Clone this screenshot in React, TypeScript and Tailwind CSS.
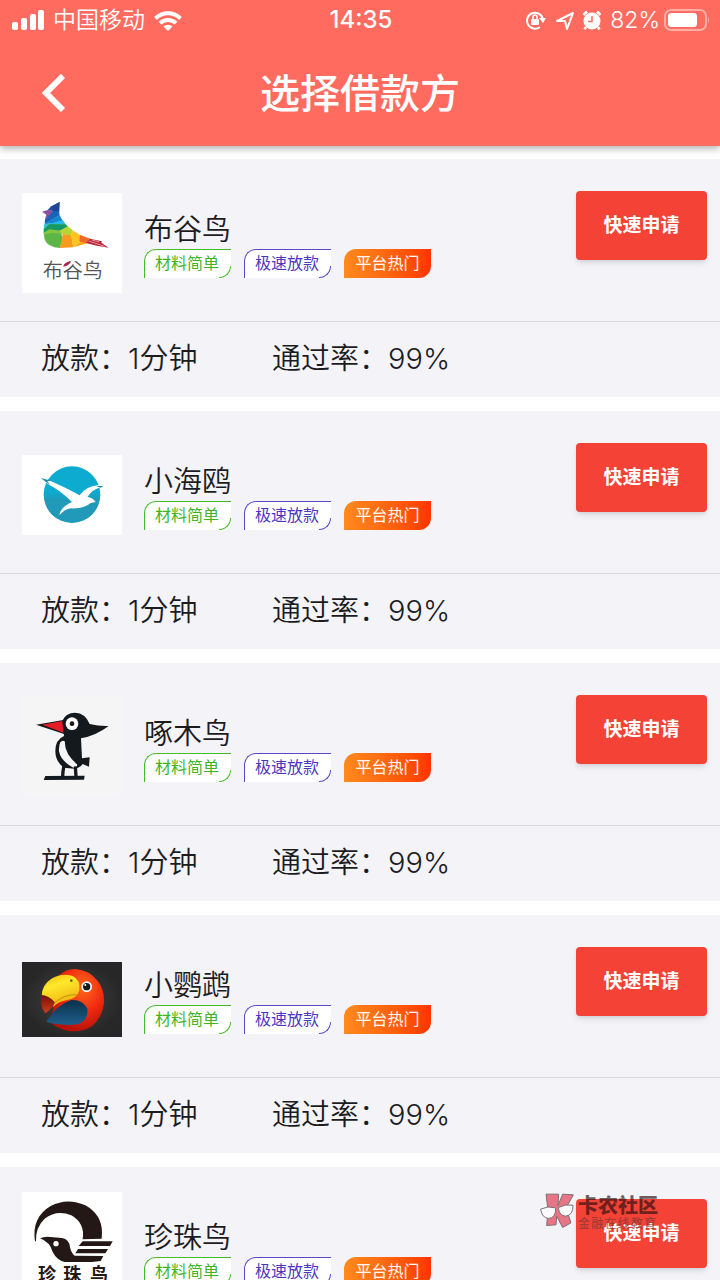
import type { ReactNode } from 'react';

function CuckooLogo() {
  return (
    <svg viewBox="36 39 300 300" className="w-full bg-white" role="img" aria-label="布谷鸟">
      <path d="M149 66 L122 80 L112 91 L148 96 Z" fill="#2450a8" />
      <path d="M149 66 L146 96 L128 92 L122 80 Z" fill="#1f4596" />
      <path d="M96 95 L113 90 L128 92 L120 108 L105 118 L109 104 Z" fill="#8a4fa0" />
      <path d="M105 118 L120 104 L128 92 L147 94 L149 106 L104 132 Z" fill="#1c62b5" />
      <path d="M103 133 L124 118 L149 106 L158 122 L130 130 Z" fill="#1487d0" />
      <path d="M103 133 L130 128 L158 120 L168 134 L118 133 L101 145 Z" fill="#28b8e4" />
      <path d="M101 146 L118 132 L167 133 L174 140 L150 152 L101 160 Z" fill="#159a63" />
      <path d="M101 160 L118 150 L152 152 L158 178 L150 204 Q112 202 104 178 Z" fill="#5cb545" />
      <path d="M101 158 L118 148 L152 152 L158 162 L130 158 L102 164 Z" fill="#86c540" />
      <path d="M150 152 L173 139 L188 151 L184 166 L158 164 Z" fill="#b9d534" />
      <path d="M158 163 L184 166 L190 202 L150 204 Z" fill="#f79a20" />
      <path d="M188 151 L210 165 L209 190 L190 202 L183 166 Z" fill="#fdc51f" />
      <path d="M209 164 L240 178 L232 190 L190 202 L209 188 Z" fill="#f9a51e" />
      <path d="M210 165 L242 177 L228 190 L208 184 Z" fill="#ee6a26" />
      <path d="M240 176 L276 184 L274 188 L296 203 L260 197 L228 189 Z" fill="#b8253c" />
      <path d="M236 183 L284 199 M246 180 L268 186" stroke="#f6d0c8" strokeWidth="2" fill="none" />
      <text x="98" y="294" fontSize="60" fontWeight="350" fill="#555" className="font-['Noto_Sans_CJK_SC',sans-serif]">
        布谷鸟
      </text>
      <path d="M160 260 Q160 248 182 244 Q180 256 160 260 Z" fill="#b3204d" />
    </svg>
  );
}

function SeagullLogo() {
  return (
    <svg viewBox="36 44 300 238" className="w-full bg-white" role="img" aria-label="小海鸥">
      <defs>
        <linearGradient id="sea" x1="0" y1="0" x2="0" y2="1">
          <stop offset="0.45" stopColor="#0eabd0" />
          <stop offset="0.6" stopColor="#2199b8" />
        </linearGradient>
      </defs>
      <circle cx="186" cy="163" r="85" fill="url(#sea)" />
      <path
        d="M100 119 L122 122 Q164 140 209 165 Q226 138 266 134 L274 140 Q248 146 232 170 Q248 172 257 185 L242 188 Q222 206 184 204 Q164 206 148 225 Q150 202 186 185 Q154 152 112 130 Z"
        fill="#fff"
      />
      <path d="M92 113 L124 121 L112 122 L120 134 Z M258 137 L280 137 L272 142 Z" fill="#178faa" />
    </svg>
  );
}

function WoodpeckerLogo() {
  return (
    <svg viewBox="36 22 300 300" className="w-full bg-[#f5f5f5]" role="img" aria-label="啄木鸟">
      <path d="M78 105 L160 91 L162 133 Z" fill="#14191d" />
      <path d="M97 105 L157 94 L160 129 Z" fill="#e51d27" />
      <path
        d="M158 92 Q168 69 195 69 Q226 70 239 103 Q266 110 296 109 Q258 138 213 146 L216 206 L239 203 L237 231 L218 223 Q208 236 194 237 L162 234 Q136 216 136 184 Q136 150 162 139 Z"
        fill="#14191d"
      />
      <path d="M151 158 Q158 150 165 156 Q162 190 201 224 Q203 236 190 234 Q152 214 147 185 Q146 168 151 158 Z" fill="#f5f5f5" />
      <circle cx="186" cy="102" r="19" fill="#fff" />
      <circle cx="186" cy="102" r="7" fill="#14191d" />
      <path d="M162 228 Q158 246 158 260 M196 230 L198 260" stroke="#14191d" strokeWidth="10" fill="none" />
      <path d="M106 259 L224 258 L222 270 L101 271 Z" fill="#14191d" />
    </svg>
  );
}

function ParrotLogo() {
  return (
    <svg viewBox="36 30 300 225" className="w-full bg-[#2e2d2c]" role="img" aria-label="小鹦鹉">
      <defs>
        <radialGradient id="night">
          <stop offset="0" stopColor="#454443" />
          <stop offset="1" stopColor="#282727" />
        </radialGradient>
        <radialGradient id="head" cx="0.6" cy="0.3" r="0.7">
          <stop offset="0" stopColor="#ff6a1e" />
          <stop offset="0.55" stopColor="#f22a10" />
          <stop offset="1" stopColor="#b81208" />
        </radialGradient>
        <linearGradient id="beak" x1="0" y1="0" x2="0.4" y2="1">
          <stop offset="0" stopColor="#f0b80c" />
          <stop offset="0.4" stopColor="#ffe92c" />
          <stop offset="1" stopColor="#eeb411" />
        </linearGradient>
        <linearGradient id="wing" x1="0" y1="0" x2="0" y2="1">
          <stop offset="0" stopColor="#0c304c" />
          <stop offset="1" stopColor="#1d5f8c" />
        </linearGradient>
        <linearGradient id="tip" x1="0" y1="0" x2="0" y2="1">
          <stop offset="0" stopColor="#6e1208" />
          <stop offset="1" stopColor="#d93a1c" />
        </linearGradient>
      </defs>
      <rect x="36" y="30" width="300" height="225" fill="url(#night)" />
      <path
        d="M148 69 Q168 51 196 51 Q238 54 264 88 Q284 116 282 152 Q276 200 244 224 Q212 242 172 236 Q140 228 124 213 L130 165 Z"
        fill="url(#head)"
      />
      <path d="M95 132 Q96 98 124 80 Q156 62 188 72 Q212 84 208 114 Q202 140 172 144 Q146 148 130 164 Z" fill="url(#beak)" />
      <path d="M128 158 Q160 126 200 128" stroke="#a97708" strokeWidth="2" fill="none" />
      <path d="M94 129 Q116 130 134 150 Q132 166 106 184 Q88 160 94 129 Z" fill="url(#tip)" />
      <path d="M109 210 Q138 160 184 144 Q218 142 232 170 Q236 206 202 217 Q158 224 109 210 Z" fill="url(#wing)" />
      <circle cx="184" cy="86" r="4" fill="#7b5a10" />
      <circle cx="230" cy="104" r="16" fill="#fff" />
      <circle cx="230" cy="104" r="11" fill="#16191c" />
      <circle cx="226" cy="99" r="3" fill="#fff" />
    </svg>
  );
}

function PearlLogo() {
  return (
    <svg viewBox="36 36 300 354" className="w-full bg-white" role="img" aria-label="珍珠鸟">
      <g fill="#231815">
        <path d="M75 184 Q64 112 122 78 Q172 52 226 76 Q276 104 276 158 L275 176 L218 178 Q226 130 184 106 Q140 88 104 116 Q76 142 78 184 Z" />
        <path d="M90 175 Q104 168 122 171 L156 174 Q178 178 180 202 Q184 220 194 227 L280 228 L272 243 L246 246 L164 246 Q140 240 128 216 Q120 186 90 175 Z" />
        <path d="M218 184 L308 184 L300 198 L206 198 Z" />
        <path d="M204 207 L294 207 L286 220 L196 220 Z" />
      </g>
      <circle cx="138" cy="191" r="8" fill="#fff" />
      <text
        x="84 160 240"
        y="304"
        fontSize="54"
        fontWeight="700"
        fill="#231815"
        className="font-['Noto_Sans_CJK_SC',sans-serif]"
      >
        珍珠鸟
      </text>
    </svg>
  );
}

function StatusBar() {
  return (
    <div className="grid h-10 grid-cols-3 items-center pr-2.5 pl-3 text-white">
      <div className="flex items-center gap-[9px]">
        <svg viewBox="0 0 32 20" className="h-5 w-8" fill="currentColor">
          <rect x="0" y="12" width="6" height="8" rx="2" />
          <rect x="9" y="8" width="6" height="12" rx="2" />
          <rect x="18" y="4" width="6" height="16" rx="2" />
          <rect x="26" y="0" width="6" height="20" rx="2" />
        </svg>
        <span className="text-[23px] leading-10 font-[350] whitespace-nowrap">中国移动</span>
        <svg viewBox="0 0 28 21" className="h-[21px] w-7" fill="none" stroke="currentColor" strokeWidth="4">
          <path d="M1.5 8.5 A17.6 17.6 0 0 1 26.5 8.5" />
          <path d="M6 13.2 A11.3 11.3 0 0 1 22 13.2" />
          <path d="M9.5 16.5 A6.4 6.4 0 0 1 18.5 16.5 L14 21 Z" fill="currentColor" stroke="none" />
        </svg>
      </div>
      <div className="text-center text-2xl font-medium">14:35</div>
      <div className="flex items-center justify-end">
        <svg viewBox="0 0 21 20" className="mr-2.5 h-5 w-[21px]" fill="none" stroke="currentColor" strokeWidth="2">
          <path d="M18 10 A8 8 0 1 0 15 17" />
          <path d="M14 8 H21 L18 13 Z" fill="currentColor" stroke="none" />
          <rect x="6" y="9" width="8" height="6" rx="1" fill="currentColor" stroke="none" />
          <path d="M8 9 V7 A2 2 0 0 1 12 7 V9" strokeWidth="1.5" />
        </svg>
        <svg viewBox="0 0 18 19" className="mr-2 h-[19px] w-[18px]" fill="none" stroke="currentColor" strokeWidth="2" strokeLinejoin="round">
          <path d="M1 10 L17 2 L11 18 L9 10 Z" />
        </svg>
        <svg viewBox="0 0 20 20" className="mr-2 h-5 w-5">
          <circle cx="10" cy="11" r="8.5" fill="#fff" />
          <path d="M1.5 5 L5 1.5 M18.5 5 L15 1.5 M4 17 L2.5 19.5 M16 17 L17.5 19.5" stroke="#fff" strokeWidth="2.5" />
          <path d="M10 6 V11.5 H6" fill="none" stroke="#ff6b5f" strokeWidth="1.5" />
        </svg>
        <span className="mr-1 text-[23px] font-[350]">82%</span>
        <svg viewBox="0 0 46 22" className="h-[22px] w-[46px]">
          <rect x="1" y="1" width="41" height="20" rx="6" fill="none" stroke="#fff" strokeOpacity="0.45" strokeWidth="2" />
          <rect x="4" y="4" width="29" height="14" rx="3" fill="#fff" />
          <path d="M44 8 Q46 11 44 14 Z" fill="#fff" fillOpacity="0.5" />
        </svg>
      </div>
    </div>
  );
}

function Watermark() {
  return (
    <div className="pointer-events-none absolute top-[1190px] left-[540px] flex items-center gap-1 opacity-65">
      <svg viewBox="30 36 102 110" className="h-[37px] w-[34px]" stroke="#44292b" strokeWidth="3">
        <path d="M48 42 L86 42 L84 76 L98 42 L130 44 L108 84 L123 128 L98 142 L80 108 L78 134 L50 136 L54 90 Z" fill="#e0344a" />
        <path d="M32 87 Q52 76 77 83 Q78 114 55 115 Q35 112 32 87 Z" fill="#fff" />
        <path d="M85 82 Q106 71 129 75 Q130 105 107 108 Q88 108 85 82 Z" fill="#fff" />
      </svg>
      <div className="whitespace-nowrap">
        <div className="pt-1 text-xl leading-6 font-black text-[#2a1010]">卡农社区</div>
        <div className="text-xs leading-3 font-medium tracking-widest text-[#7a3434]">金融在线教育</div>
      </div>
    </div>
  );
}

// White tag: a line along the top and left, and an arc in the bottom right corner
function OutlineTag({ className, children }: { className: string; children: ReactNode }) {
  return (
    <span
      className={`relative h-[29px] w-[87px] rounded-tl-xl rounded-br-xl border-t border-l bg-white pr-0.5 text-center leading-[26px] after:absolute after:right-0 after:bottom-0 after:size-3 after:rounded-br-xl after:border-r after:border-b after:border-inherit after:content-[''] ${className}`}
    >
      {children}
    </span>
  );
}

function LenderCard({ name, logo }: { name: string; logo: ReactNode }) {
  return (
    <li className="bg-[#f3f3f8]">
      <div className="flex h-[163px] items-center border-b border-[#dadade] pt-1.5 pr-[13px] pl-[22px]">
        <div className="w-[100px] shrink-0">{logo}</div>
        <div className="ml-[22px]">
          <h2 className="pt-0.5 text-[29px] leading-[38px] font-[350] text-[#1c1c1e]">{name}</h2>
          <div className="flex gap-[13px] text-base">
            <OutlineTag className="border-[#43bd27] text-[#3fb41f]">材料简单</OutlineTag>
            <OutlineTag className="border-[#5b48c8] text-[#4b38c0]">极速放款</OutlineTag>
            <span className="h-[29px] w-[87px] rounded-tl-xl rounded-br-xl bg-linear-to-r from-[#ff8a1c] to-[#ff3300] text-center leading-7 text-white">
              平台热门
            </span>
          </div>
        </div>
        <button
          type="button"
          className="mt-[26px] ml-auto h-[69px] w-[131px] self-start rounded-sm bg-[#f44336] pt-0.5 text-[19px] font-bold text-white shadow-md"
        >
          快速申请
        </button>
      </div>
      <div className="flex h-[75px] items-center pb-0.5 pl-[41px] text-[29px] font-[350] text-[#1c1c1e]">
        <p className="w-[231px]">放款：1分钟</p>
        <p>通过率：99%</p>
      </div>
    </li>
  );
}

export default function App() {
  const lenders = [
    { name: '布谷鸟', logo: <CuckooLogo /> },
    { name: '小海鸥', logo: <SeagullLogo /> },
    { name: '啄木鸟', logo: <WoodpeckerLogo /> },
    { name: '小鹦鹉', logo: <ParrotLogo /> },
    { name: '珍珠鸟', logo: <PearlLogo /> },
  ];

  return (
    <div
      lang="zh-CN"
      className="relative flex h-screen flex-col overflow-hidden bg-white font-['Inter','Noto_Sans_CJK_SC',sans-serif]"
    >
      {/* Header */}
      <header className="z-10 shrink-0 bg-[#ff6b5f] shadow-[0_2px_8px_rgba(0,0,0,0.35)]">
        <StatusBar />
        <div className="grid h-[106px] grid-cols-[80px_1fr_80px] items-center text-white">
          <button type="button" aria-label="返回" className="pl-[42px]">
            <svg viewBox="0 0 24 38" className="h-[38px] w-6" fill="none" stroke="currentColor" strokeWidth="6">
              <path d="M21 2 L4 19 L21 36" />
            </svg>
          </button>
          <h1 className="pt-0.5 text-center text-[40px] leading-none font-medium">选择借款方</h1>
        </div>
      </header>

      {/* Lender list */}
      <main className="min-h-0 flex-1 overflow-y-auto pt-[13px] [scrollbar-width:none]">
        <ul className="flex flex-col gap-3.5">
          {lenders.map((lender) => (
            <LenderCard key={lender.name} {...lender} />
          ))}
        </ul>
      </main>

      <Watermark />
    </div>
  );
}
